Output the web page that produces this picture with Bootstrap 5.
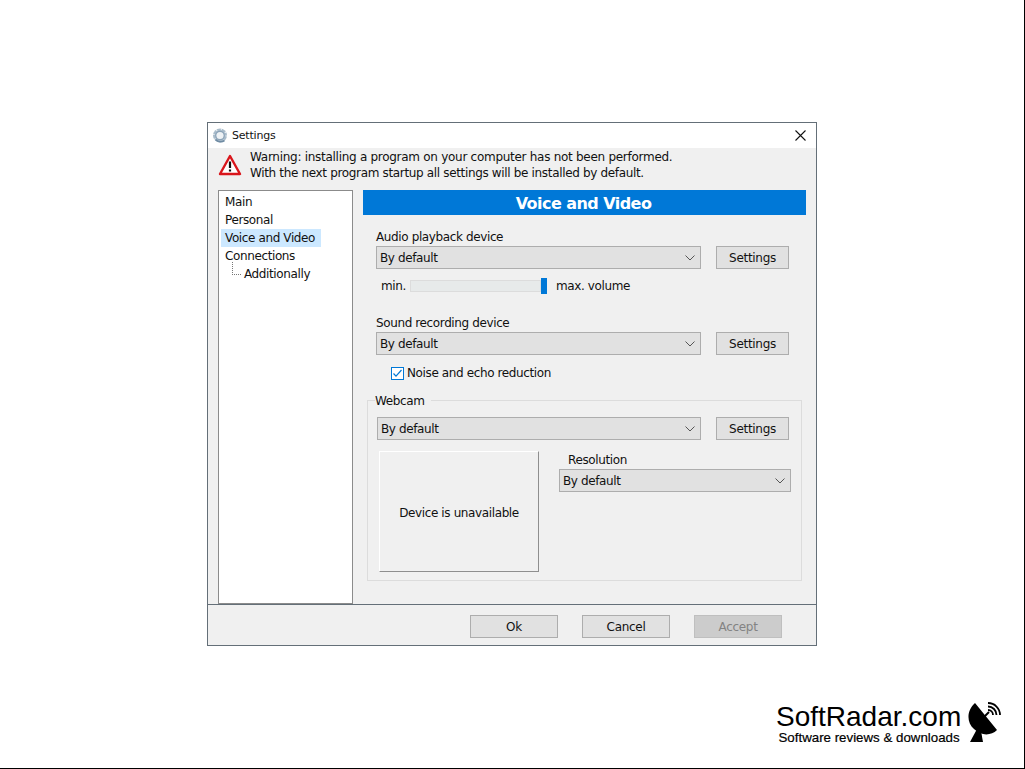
<!DOCTYPE html>
<html lang="en">
<head>
<meta charset="utf-8">
<title>Settings</title>
<link href="https://cdn.jsdelivr.net/npm/bootstrap@5.3.0/dist/css/bootstrap.min.css" rel="stylesheet">
<style>
html,body{height:100%;margin:0}
body{background:#fff;font-family:"DejaVu Sans",sans-serif;font-size:12px;line-height:15px;color:#111;overflow:hidden;letter-spacing:-.38px}
.page{width:1025px;height:769px;border-bottom:1px solid #000;border-right:1px solid #000;padding:122px 0 0 207px}
.win{width:610px;height:524px;border:1px solid #646f78;background:#f0f0f0}
.tbar{height:25px;background:#fff;padding-left:4px;padding-right:10px}
.ttl{font-size:11px;letter-spacing:-.2px}
.warn{height:42px;padding:1px 0 0 10px}
.warntxt{margin-left:8px;line-height:16px;letter-spacing:-.28px}
.warntxt .ln2{letter-spacing:-.34px}
.mainarea{height:414px;padding-left:10px}
.tree{width:135px;background:#fff;border:1px solid #8b8b8b;padding:2px}
.tree div{height:18px;line-height:18px;padding-left:4px}
.tree .on{background:#cce8ff;width:100px}
.tree .sub{padding-left:23px;position:relative}
.tree .sub::before{content:"";position:absolute;left:11px;top:-3px;width:9px;height:13px;border-left:1px dotted #777;border-bottom:1px dotted #777}
.panel{width:443px;margin-left:10px}
.phead{height:25px;background:#0078d7;color:#fff;font-weight:700;font-size:16px;line-height:27px;text-align:center;letter-spacing:-.55px;padding-right:2px}
.lbl{line-height:15px}
.wselect.form-select{height:23px;border:1px solid #adadad;border-radius:0;background-color:#e1e1e1;padding:1px 20px 0 3px;font-size:12px;line-height:20px;color:#111;box-shadow:none;letter-spacing:-.38px;background-position:right 5px center;background-size:10px 6px;background-image:url("data:image/svg+xml,%3csvg xmlns='http://www.w3.org/2000/svg' viewBox='0 0 10 6'%3e%3cpath fill='none' stroke='%23555' d='M.5 .5 5 5 9.5 .5'/%3e%3c/svg%3e")}
.wbtn.btn{width:73px;height:23px;padding:1px 0 0;border:1px solid #adadad;border-radius:0;background:#e1e1e1;color:#111;font-size:12px;line-height:20px;letter-spacing:-.3px}
.wbtn.btn.wide{width:88px}
.wbtn.btn:disabled{opacity:1;background:#ccc;border-color:#bfbfbf;color:#838383}
.rowa{padding-left:13px;margin-top:1px}
.s1{width:325px}
.gap15{margin-left:15px}
.lab1{padding-left:13px;margin-top:15px}
.vol{padding-left:18px;margin-top:9px;height:16px}
.minv{width:20px}
.track{width:131px;height:12px;background:#e7eaea;border:1px solid #dcdcdc;margin:0 0 0 9px}
.thumb{width:6px;height:16px;background:#0078d7}
.maxv{margin-left:9px}
.lab2{padding-left:13px;margin-top:22px}
.chkrow{padding-left:28px;margin-top:11px;height:15px}
.wchk.form-check-input{width:13px;height:13px;margin:0 3px 0 0;border:1px solid #0078d7;border-radius:0;background-color:#fff;background-size:11px;background-image:url("data:image/svg+xml,%3csvg xmlns='http://www.w3.org/2000/svg' viewBox='0 0 11 11'%3e%3cpath fill='none' stroke='%230078d7' stroke-width='1.2' d='M1.5 5.5 4 8.2 9.5 2'/%3e%3c/svg%3e")}
.cam{margin:19px 0 0 4px;width:435px;height:181px;border:1px solid #dcdcdc;position:relative;padding:16px 0 0 9px}
.camleg{position:absolute;left:7px;top:-7px;background:#f0f0f0;padding-right:6px;margin:0;font-size:12px;line-height:15px;width:auto;float:none}
.s2{width:324px}
.cambtm{margin-top:11px;padding-left:2px}
.devbox{width:160px;height:121px;padding-top:4px;border:1px solid;border-color:#fff #8e8e8e #8e8e8e #fff}
.reswrap{width:232px;margin-left:20px;padding-top:2px}
.reslbl{padding-left:9px;height:16px}
.s3{width:232px}
.foot{height:41px;border-top:1px solid #646f78;padding:10px 0 0 262px}
.foot .btn+.btn{margin-left:24px}
.logo{position:absolute;left:776px;top:701px;color:#000;font-family:"Liberation Sans",sans-serif;letter-spacing:0}
.logo1{font-size:28px;line-height:31px;width:186px;white-space:nowrap}
.logo2{font-size:13.3px;line-height:14px;margin-left:2.500px;margin-top:-1px;white-space:nowrap;-webkit-text-stroke:.2px #000}
.dish{margin:1px 0 0 6px}
</style>
</head>
<body>
<div class="page position-relative">
  <div class="win d-flex flex-column">
    <div class="tbar d-flex align-items-center">
      <svg width="16" height="17" viewBox="0 0 16 17" class="me-1"><circle cx="8" cy="8.500" r="7" fill="#a9bccb"/><circle cx="8" cy="8.500" r="6.200" fill="none" stroke="#fff" stroke-width="1.600" stroke-dasharray="1 3.900" opacity=".8"/><circle cx="8" cy="8.500" r="4.800" fill="#8ba3b8"/><circle cx="8" cy="8.500" r="3.600" fill="#eef2f5"/><path d="M3.500 12.500A7 7 0 0 0 12.500 13.500" fill="none" stroke="#6f8ba3" stroke-width="1.600"/></svg>
      <span class="ttl">Settings</span>
      <svg width="11" height="11" viewBox="0 0 11 11" class="ms-auto"><path d="M.5 .5 10.500 10.500M10.500 .5 .5 10.500" stroke="#111" stroke-width="1.100" fill="none"/></svg>
    </div>
    <div class="warn d-flex align-items-start">
      <svg width="24" height="24" viewBox="0 0 24 24" class="mt-1"><path d="M12 3 22 21H2Z" fill="#fff" stroke="#d9161c" stroke-width="2.400" stroke-linejoin="round"/><path d="M12 8.500v6.500M12 16.500v2" stroke="#111" stroke-width="2.200"/></svg>
      <div class="warntxt">Warning: installing a program on your computer has not been performed.<br><span class="ln2">With the next program startup all settings will be installed by default.</span></div>
    </div>
    <div class="mainarea d-flex">
      <div class="tree">
        <div>Main</div>
        <div>Personal</div>
        <div class="on">Voice and Video</div>
        <div>Connections</div>
        <div class="sub">Additionally</div>
      </div>
      <div class="panel">
        <div class="phead">Voice and Video</div>
        <div class="lab1 lbl">Audio playback device</div>
        <div class="rowa d-flex">
          <select class="form-select wselect s1"><option>By default</option></select>
          <button class="btn wbtn gap15" type="button">Settings</button>
        </div>
        <div class="vol d-flex align-items-center">
          <span class="minv">min.</span>
          <div class="track"></div>
          <div class="thumb"></div>
          <span class="maxv">max. volume</span>
        </div>
        <div class="lab2 lbl">Sound recording device</div>
        <div class="rowa d-flex">
          <select class="form-select wselect s1"><option>By default</option></select>
          <button class="btn wbtn gap15" type="button">Settings</button>
        </div>
        <div class="chkrow d-flex align-items-center">
          <input class="form-check-input wchk" type="checkbox" checked aria-label="Noise and echo reduction">
          <span>Noise and echo reduction</span>
        </div>
        <fieldset class="cam">
          <legend class="camleg">Webcam</legend>
          <div class="d-flex">
            <select class="form-select wselect s2"><option>By default</option></select>
            <button class="btn wbtn gap15" type="button">Settings</button>
          </div>
          <div class="cambtm d-flex">
            <div class="devbox d-flex align-items-center justify-content-center">Device is unavailable</div>
            <div class="reswrap">
              <div class="reslbl">Resolution</div>
              <select class="form-select wselect s3"><option>By default</option></select>
            </div>
          </div>
        </fieldset>
      </div>
    </div>
    <div class="foot d-flex">
      <button class="btn wbtn wide" type="button">Ok</button>
      <button class="btn wbtn wide" type="button">Cancel</button>
      <button class="btn wbtn wide" type="button" disabled>Accept</button>
    </div>
  </div>
  <div class="logo d-flex">
    <div>
      <div class="logo1">SoftRadar.com</div>
      <div class="logo2">Software reviews &amp; downloads</div>
    </div>
    <svg class="dish" width="34" height="41" viewBox="0 0 34 41"><path d="M7 1C-1 8-2 20 6 27 13 34 23 34 29 28Z" fill="#000"/><path d="M9 27 2 40H15L13 29Z" fill="#000"/><path d="M16 15 21 10" stroke="#000" stroke-width="2"/><path d="M20 8A5 5 0 0 1 25 13M20 4.500A8.500 8.500 0 0 1 28.500 13M20 1A12 12 0 0 1 32 13" fill="none" stroke="#000" stroke-width="1.800"/></svg>
  </div>
</div>
<script src="https://cdn.jsdelivr.net/npm/bootstrap@5.3.0/dist/js/bootstrap.bundle.min.js"></script>
</body>
</html>
